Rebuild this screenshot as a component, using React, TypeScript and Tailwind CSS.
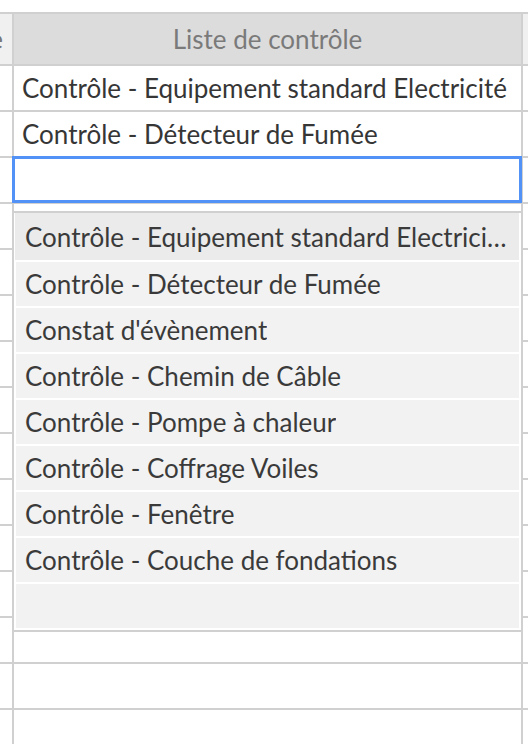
import React from "react";

const rows: string[] = [
  "Contrôle - Equipement standard Electricité",
  "Contrôle - Détecteur de Fumée",
  "",
  "", "", "", "", "", "", "", "", "", "", "", "",
];

const items: string[] = [
  "Contrôle - Equipement standard Electricité",
  "Contrôle - Détecteur de Fumée",
  "Constat d'évènement",
  "Contrôle - Chemin de Câble",
  "Contrôle - Pompe à chaleur",
  "Contrôle - Coffrage Voiles",
  "Contrôle - Fenêtre",
  "Contrôle - Couche de fondations",
  "",
];

export default function App() {
  return (
    <div
      className="relative w-[528px] h-[744px] overflow-hidden bg-white pt-[12px]"
      style={{ fontFamily: "Lato, 'Noto Sans', sans-serif" }}
    >
      <div className="border-t-2 border-[#d0d0d0]">
        {/* header */}
        <div className="flex h-[52px] border-b-2 border-[#d0d0d0]">
          <div className="w-[14px] shrink-0 border-r-2 border-[#d0d0d0] bg-[#f0f0f0] overflow-hidden flex items-center justify-end">
            <span className="text-[26px] text-[#777] whitespace-nowrap pr-[9px]">Date</span>
          </div>
          <div className="w-[509px] shrink-0 border-r-2 border-[#d0d0d0] bg-[#dcdcdc] flex items-center justify-center">
            <span className="text-[26px] text-[#7a7a7a] leading-none">Liste de contrôle</span>
          </div>
          <div className="flex-1 bg-[#f0f0f0]" />
        </div>
        {rows.map((r, i) => (
          <div key={i} className="flex h-[46px] border-b-2 border-[#d0d0d0]">
            <div className="w-[14px] shrink-0 border-r-2 border-[#d0d0d0] bg-white" />
            <div className="w-[509px] shrink-0 border-r-2 border-[#d0d0d0] bg-white flex items-center pl-[8px] overflow-hidden">
              <span className="text-[26px] text-[#363636] whitespace-nowrap leading-none">{r}</span>
            </div>
            <div className="flex-1 bg-white" />
          </div>
        ))}
      </div>

      {/* editor */}
      <div className="absolute left-[12px] top-[156px] w-[510px] h-[47px] border-[3px] border-[#5292f7] bg-white" />

      {/* dropdown */}
      <div className="absolute left-[14px] top-[211px] w-[507px] bg-white border-t-2 border-b-2 border-[#d0d0d0] pr-[2px] pb-[2px] flex flex-col gap-[2px]">
        {items.map((t, i) => (
          <div
            key={i}
            className={
              i === 0
                ? "h-[47px] ml-[1px] bg-[#ebebeb] flex items-center pl-[10px] pr-[12px] overflow-hidden"
                : "h-[44px] ml-[2px] bg-[#f2f2f2] flex items-center pl-[9px] pr-[12px] overflow-hidden"
            }
          >
            <span className="text-[26px] text-[#3a3a3a] whitespace-nowrap overflow-hidden text-ellipsis leading-none py-[4px]">
              {t}
            </span>
          </div>
        ))}
      </div>
    </div>
  );
}
